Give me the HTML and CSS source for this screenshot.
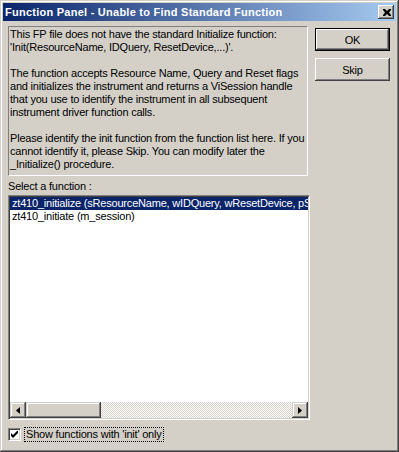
FILE: index.html
```html
<!DOCTYPE html>
<html>
<head>
<meta charset="utf-8">
<link rel="stylesheet" href="styles.css">
</head>
<body>
<div class="window">
  <div class="titlebar">
    <span class="title">Function Panel - Unable to Find Standard Function</span>
    <span class="close"><svg width="8" height="7" viewBox="0 0 8 7"><path d="M0 0h2l2 2 2-2h2v1l-2 2.5 2 2.5v1h-2l-2-2-2 2h-2v-1l2-2.5-2-2.5z" fill="#000"/></svg></span>
  </div>
  <div class="client">
    <div class="left">
      <div class="info">This FP file does not have the standard Initialize function:<br>'Init(ResourceName, IDQuery, ResetDevice,...)'.<br><br>The function accepts Resource Name, Query and Reset flags<br>and initializes the instrument and returns a ViSession handle<br>that you use to identify the instrument in all subsequent<br>instrument driver function calls.<br><br>Please identify the init function from the function list here. If you<br>cannot identify it, please Skip. You can modify later the<br>_Initialize() procedure.</div>
      <div class="label">Select a function :</div>
      <div class="listbox">
        <div class="rows">
          <div class="row selected">zt410_initialize (sResourceName, wIDQuery, wResetDevice, pSession)</div>
          <div class="row">zt410_initiate (m_session)</div>
        </div>
        <div class="hscroll">
          <div class="sbtn"><svg width="4" height="7" viewBox="0 0 4 7"><path d="M4 0v7L0 3.5z" fill="#000"/></svg></div>
          <div class="thumb"></div>
          <div class="track"></div>
          <div class="sbtn"><svg width="4" height="7" viewBox="0 0 4 7"><path d="M0 0v7l4-3.5z" fill="#000"/></svg></div>
        </div>
      </div>
      <div class="checkrow">
        <span class="checkbox"><svg width="7" height="7" viewBox="0 0 7 7"><path d="M0 2v3l2 2 5-5V-1L2 4z" fill="#000"/></svg></span>
        <span class="checklabel">Show functions with 'init' only</span>
      </div>
    </div>
    <div class="right">
      <div class="btn default"><span>OK</span></div>
      <div class="btn"><span>Skip</span></div>
    </div>
  </div>
</div>
</body>
</html>
```
FILE: styles.css
```css
html, body {
  margin: 0;
  padding: 0;
  background: #d4d0c8;
}
.window {
  width: 399px;
  height: 452px;
  box-sizing: border-box;
  padding: 3px;
  background: #d4d0c8;
  box-shadow: inset -1px -1px #404040, inset 1px 1px #d4d0c8, inset -2px -2px #808080, inset 2px 2px #fff;
  font-family: "Liberation Sans", Arial, sans-serif;
  font-size: 11px;
  letter-spacing: -0.2px;
  color: #000;
}
.titlebar {
  height: 18px;
  display: flex;
  align-items: center;
  justify-content: space-between;
  padding-left: 2px;
  padding-right: 2px;
  background: linear-gradient(to right, #0a246a, #a6caf0);
}
.title {
  color: #fff;
  font-weight: bold;
  font-size: 11px;
  font-family: "Liberation Sans", Arial, sans-serif;
  letter-spacing: 0.25px;
}
.close {
  width: 16px;
  height: 14px;
  box-sizing: border-box;
  background: #d4d0c8;
  box-shadow: inset -1px -1px #404040, inset 1px 1px #fff, inset -2px -2px #808080;
  display: flex;
  align-items: center;
  justify-content: center;
  padding-left: 1px;
}
.client {
  display: flex;
  padding-left: 5px;
}
.left {
  width: 302px;
  display: flex;
  flex-direction: column;
}
.info {
  margin-top: 5px;
  width: 300px;
  height: 150px;
  box-sizing: border-box;
  border-top: 1px solid #808080;
  border-left: 1px solid #808080;
  border-right: 1px solid #fff;
  border-bottom: 1px solid #fff;
  padding: 1px 1px;
  line-height: 13px;
  white-space: nowrap;
  overflow: hidden;
}
.label {
  margin-top: 4px;
  line-height: 13px;
  height: 15px;
}
.listbox {
  width: 302px;
  height: 225px;
  box-sizing: border-box;
  background: #fff;
  border-top: 1px solid #808080;
  border-left: 1px solid #808080;
  border-right: 1px solid #fff;
  border-bottom: 1px solid #fff;
  box-shadow: inset 1px 1px #404040, inset -1px -1px #d4d0c8;
  padding: 1px;
  display: flex;
  flex-direction: column;
}
.rows {
  flex: 1;
  overflow: hidden;
}
.row {
  height: 13px;
  line-height: 13px;
  padding-left: 2px;
  white-space: nowrap;
  overflow: hidden;
}
.row.selected {
  background: #0a246a;
  color: #fff;
}
.hscroll {
  height: 16px;
  display: flex;
}
.sbtn, .thumb {
  height: 16px;
  box-sizing: border-box;
  background: #d4d0c8;
  box-shadow: inset -1px -1px #404040, inset 1px 1px #d4d0c8, inset -2px -2px #808080, inset 2px 2px #fff;
}
.sbtn {
  width: 16px;
  display: flex;
  align-items: center;
  justify-content: center;
}
.thumb {
  width: 75px;
}
.track {
  flex: 1;
  background: repeating-conic-gradient(#d4d0c8 0 25%, #fff 0 50%) 0 0 / 2px 2px;
}
.checkrow {
  margin-top: 7px;
  display: flex;
  align-items: center;
  height: 14px;
}
.checkbox {
  width: 13px;
  height: 13px;
  box-sizing: border-box;
  background: #fff;
  border-top: 1px solid #808080;
  border-left: 1px solid #808080;
  border-right: 1px solid #fff;
  border-bottom: 1px solid #fff;
  box-shadow: inset 1px 1px #404040, inset -1px -1px #d4d0c8;
  display: flex;
  align-items: center;
  justify-content: center;
}
.checklabel {
  margin-left: 4px;
  outline: 1px dotted #000;
  line-height: 13px;
  padding: 0 1px;
}
.right {
  margin-left: 5px;
  margin-top: 7px;
  display: flex;
  flex-direction: column;
  gap: 7px;
}
.btn {
  width: 75px;
  height: 23px;
  box-sizing: border-box;
  background: #d4d0c8;
  box-shadow: inset -1px -1px #404040, inset 1px 1px #fff, inset -2px -2px #808080, inset 2px 2px #d4d0c8;
  display: flex;
  align-items: center;
  justify-content: center;
  font-size: 11px;
}
.btn.default {
  border: 1px solid #000;
}
```
